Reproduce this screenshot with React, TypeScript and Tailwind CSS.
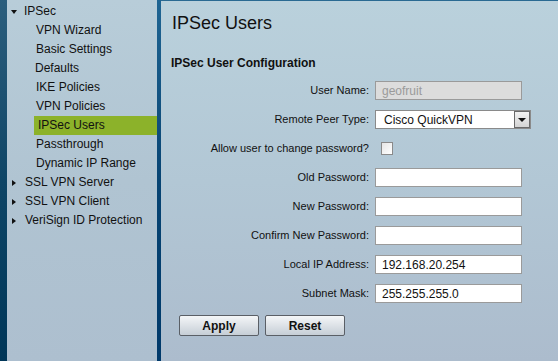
import React from "react";

const navItems = [
  { label: "VPN Wizard", active: false },
  { label: "Basic Settings", active: false },
  { label: "Defaults", active: false, shift: true },
  { label: "IKE Policies", active: false },
  { label: "VPN Policies", active: false },
  { label: "IPSec Users", active: true },
  { label: "Passthrough", active: false },
  { label: "Dynamic IP Range", active: false },
];

const groups = ["SSL VPN Server", "SSL VPN Client", "VeriSign ID Protection"];

function TextRow({ label, value, disabled }: { label: string; value?: string; disabled?: boolean }) {
  return (
    <div className="flex h-[29px] items-center">
      <div className="w-[209px] pr-[1px] text-right text-[11px] text-[#111]">{label}</div>
      <div
        className={`ml-[5px] flex h-[19px] w-[147px] items-center border border-[#9a9a9a] pl-[6px] text-[12px] ${
          disabled ? "bg-[#dcdcdc] text-[#9a9a9a]" : "bg-white text-[#111]"
        }`}
      >
        {value}
      </div>
    </div>
  );
}

export default function App() {
  return (
    <div className="flex h-[361px] w-[558px] overflow-hidden font-['Liberation_Sans',Arial,sans-serif]">
      <div className="w-[7px] bg-gradient-to-b from-[#2b5e7d] via-[#0e4566] to-[#003658]" />

      <nav className="w-[150px] bg-gradient-to-b from-[#b8cdd9] via-[#b0c4d2] to-[#adbfcf] pt-[2px] text-[12px] leading-[19px] text-[#111]">
        <div className="flex items-center pl-[4px]">
          <span className="mr-[7px] inline-block h-0 w-0 border-x-[3px] border-t-[4px] border-x-transparent border-t-[#111]" />
          <span>IPSec</span>
        </div>
        {navItems.map((item) =>
          item.active ? (
            <div key={item.label} className="ml-[27px] bg-[#8cb22a] pl-[4px] text-[#111]">
              {item.label}
            </div>
          ) : (
            <div key={item.label} className={item.shift ? "pl-[28px]" : "pl-[29px]"}>
              {item.label}
            </div>
          )
        )}
        {groups.map((g) => (
          <div key={g} className="flex items-center pl-[5px]">
            <span className="mr-[9px] inline-block h-0 w-0 border-y-[3px] border-l-[4px] border-y-transparent border-l-[#111]" />
            <span>{g}</span>
          </div>
        ))}
      </nav>

      <div className="w-[4px] bg-gradient-to-b from-[#1f6593] via-[#074473] to-[#00396a]" />

      <main className="flex-1 border-t border-[#2a6a92] bg-gradient-to-b from-[#bad1dc] via-[#b2c7d5] to-[#acbccd]">
        <h1 className="ml-[11px] mt-[12px] text-[18px] leading-[21px] text-[#111]">IPSec Users</h1>
        <h2 className="ml-[10px] mt-[22px] text-[12px] font-bold leading-[14px] text-[#111]">IPSec User Configuration</h2>

        <div className="mt-[6px]">
          <TextRow label="User Name:" value="geofruit" disabled />

          <div className="flex h-[29px] items-center">
            <div className="w-[209px] pr-[1px] text-right text-[11px] text-[#111]">Remote Peer Type:</div>
            <div className="ml-[5px] flex h-[19px] w-[156px] items-center justify-between border border-[#8a8a8a] bg-white pl-[8px] text-[12px] text-[#111]">
              <span>Cisco QuickVPN</span>
              <span className="flex h-[17px] w-[16px] items-center justify-center border border-[#6a6a6a] bg-gradient-to-b from-[#f2f2f2] to-[#d4d4d4]">
                <span className="inline-block h-0 w-0 border-x-[4px] border-t-[4px] border-x-transparent border-t-[#111]" />
              </span>
            </div>
          </div>

          <div className="flex h-[29px] items-center">
            <div className="w-[209px] pr-[1px] text-right text-[11px] text-[#111]">Allow user to change password?</div>
            <div className="ml-[11px] h-[13px] w-[12px] border border-[#8a8a8a] bg-gradient-to-br from-[#e6e6e6] to-white" />
          </div>

          <TextRow label="Old Password:" />
          <TextRow label="New Password:" />
          <TextRow label="Confirm New Password:" />
          <TextRow label="Local IP Address:" value="192.168.20.254" />
          <TextRow label="Subnet Mask:" value="255.255.255.0" />
        </div>

        <div className="ml-[18px] mt-[7px] flex gap-[6px]">
          <button className="h-[21px] w-[80px] rounded-[2px] border border-[#5a5f66] bg-gradient-to-b from-[#f4f6f8] to-[#c6ced6] text-[12px] font-bold text-[#111]">
            Apply
          </button>
          <button className="h-[21px] w-[80px] rounded-[2px] border border-[#5a5f66] bg-gradient-to-b from-[#f4f6f8] to-[#c6ced6] text-[12px] font-bold text-[#111]">
            Reset
          </button>
        </div>
      </main>
    </div>
  );
}
